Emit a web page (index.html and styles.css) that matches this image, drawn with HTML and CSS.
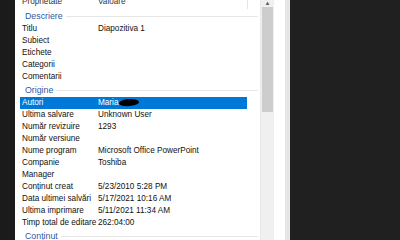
FILE: index.html
```html
<!DOCTYPE html>
<html lang="ro">
<head>
    <meta charset="UTF-8">
    <title>Proprietăți</title>
    <link rel="stylesheet" href="styles.css">
</head>
<body>

<div class="edge"></div>

<div class="panel">
    <div class="list">
        <div class="row head"><span class="k">Proprietate</span><span class="v">Valoare</span></div>

        <div class="group"><span>Descriere</span><i></i></div>
        <div class="row"><span class="k">Titlu</span><span class="v">Diapozitiva 1</span></div>
        <div class="row"><span class="k">Subiect</span><span class="v"></span></div>
        <div class="row"><span class="k">Etichete</span><span class="v"></span></div>
        <div class="row"><span class="k">Categorii</span><span class="v"></span></div>
        <div class="row"><span class="k">Comentarii</span><span class="v"></span></div>

        <div class="group"><span>Origine</span><i></i></div>
        <div class="row selected"><span class="k">Autori</span><span class="v">Maria<b class="blot"></b></span></div>
        <div class="row"><span class="k">Ultima salvare</span><span class="v">Unknown User</span></div>
        <div class="row"><span class="k">Număr revizuire</span><span class="v">1293</span></div>
        <div class="row"><span class="k">Număr versiune</span><span class="v"></span></div>
        <div class="row"><span class="k">Nume program</span><span class="v">Microsoft Office PowerPoint</span></div>
        <div class="row"><span class="k">Companie</span><span class="v">Toshiba</span></div>
        <div class="row"><span class="k">Manager</span><span class="v"></span></div>
        <div class="row"><span class="k">Conținut creat</span><span class="v">5/23/2010 5:28 PM</span></div>
        <div class="row"><span class="k">Data ultimei salvări</span><span class="v">5/17/2021 10:16 AM</span></div>
        <div class="row"><span class="k">Ultima imprimare</span><span class="v">5/11/2021 11:34 AM</span></div>
        <div class="row"><span class="k">Timp total de editare</span><span class="v">262:04:00</span></div>

        <div class="group"><span>Conținut</span><i></i></div>
    </div>

    <div class="scroll">
        <div class="arrow">&#9650;</div>
        <div class="thumb"></div>
        <div class="track"></div>
    </div>
</div>

<div class="desk"></div>

</body>
</html>
```

FILE: styles.css
```css
body {
    margin: 0;
    height: 240px;
    overflow: hidden;
    display: flex;
    background: #1f1f1f;
    font-family: "Liberation Sans", Arial, sans-serif;
    font-size: 8.2px;
    color: #111;
}
.edge {
    width: 15px;
    background: #1b1b1b;
}
.panel {
    width: 270px;
    background: #fff;
    border-right: 5px solid #e6e6e6;
    display: flex;
    gap: 2px;
}
.list {
    width: 238px;
    padding-left: 5px;
    margin-top: -3px;
}
.row {
    width: 227px;
    height: 12px;
    line-height: 12px;
    display: flex;
    white-space: nowrap;
}
.row .k {
    width: 76px;
    padding-left: 2px;
}
.row .v {
    flex: 1;
}
.head {
    line-height: 10px;
    color: #333;
    border-right: 1px solid #e5e5e5;
}
.selected {
    background: #0078d7;
    color: #fff;
}
.blot {
    display: inline-block;
    width: 20px;
    height: 7px;
    margin-left: 1px;
    vertical-align: -1px;
    background: #000;
    border-radius: 50% 60% 45% 55%;
    transform: rotate(-6deg);
}
.group {
    height: 14px;
    display: flex;
    align-items: center;
    gap: 3px;
    padding-left: 5px;
    color: #2e5aa6;
    font-size: 8.8px;
}
.group i {
    flex: 1;
    height: 1px;
    background: #e6e6e6;
}
.scroll {
    width: 13px;
    margin-top: -5px;
    display: flex;
    flex-direction: column;
    background: #f0f0f0;
    border-left: 1px solid #e8e8e8;
}
.arrow {
    height: 12px;
    line-height: 16px;
    text-align: center;
    font-size: 6px;
    color: #606060;
}
.thumb {
    height: 105px;
    margin: 0 1px;
    background: #cdcdcd;
}
.track {
    flex: 1;
}
.desk {
    flex: 1;
    background: #202020;
}
```
